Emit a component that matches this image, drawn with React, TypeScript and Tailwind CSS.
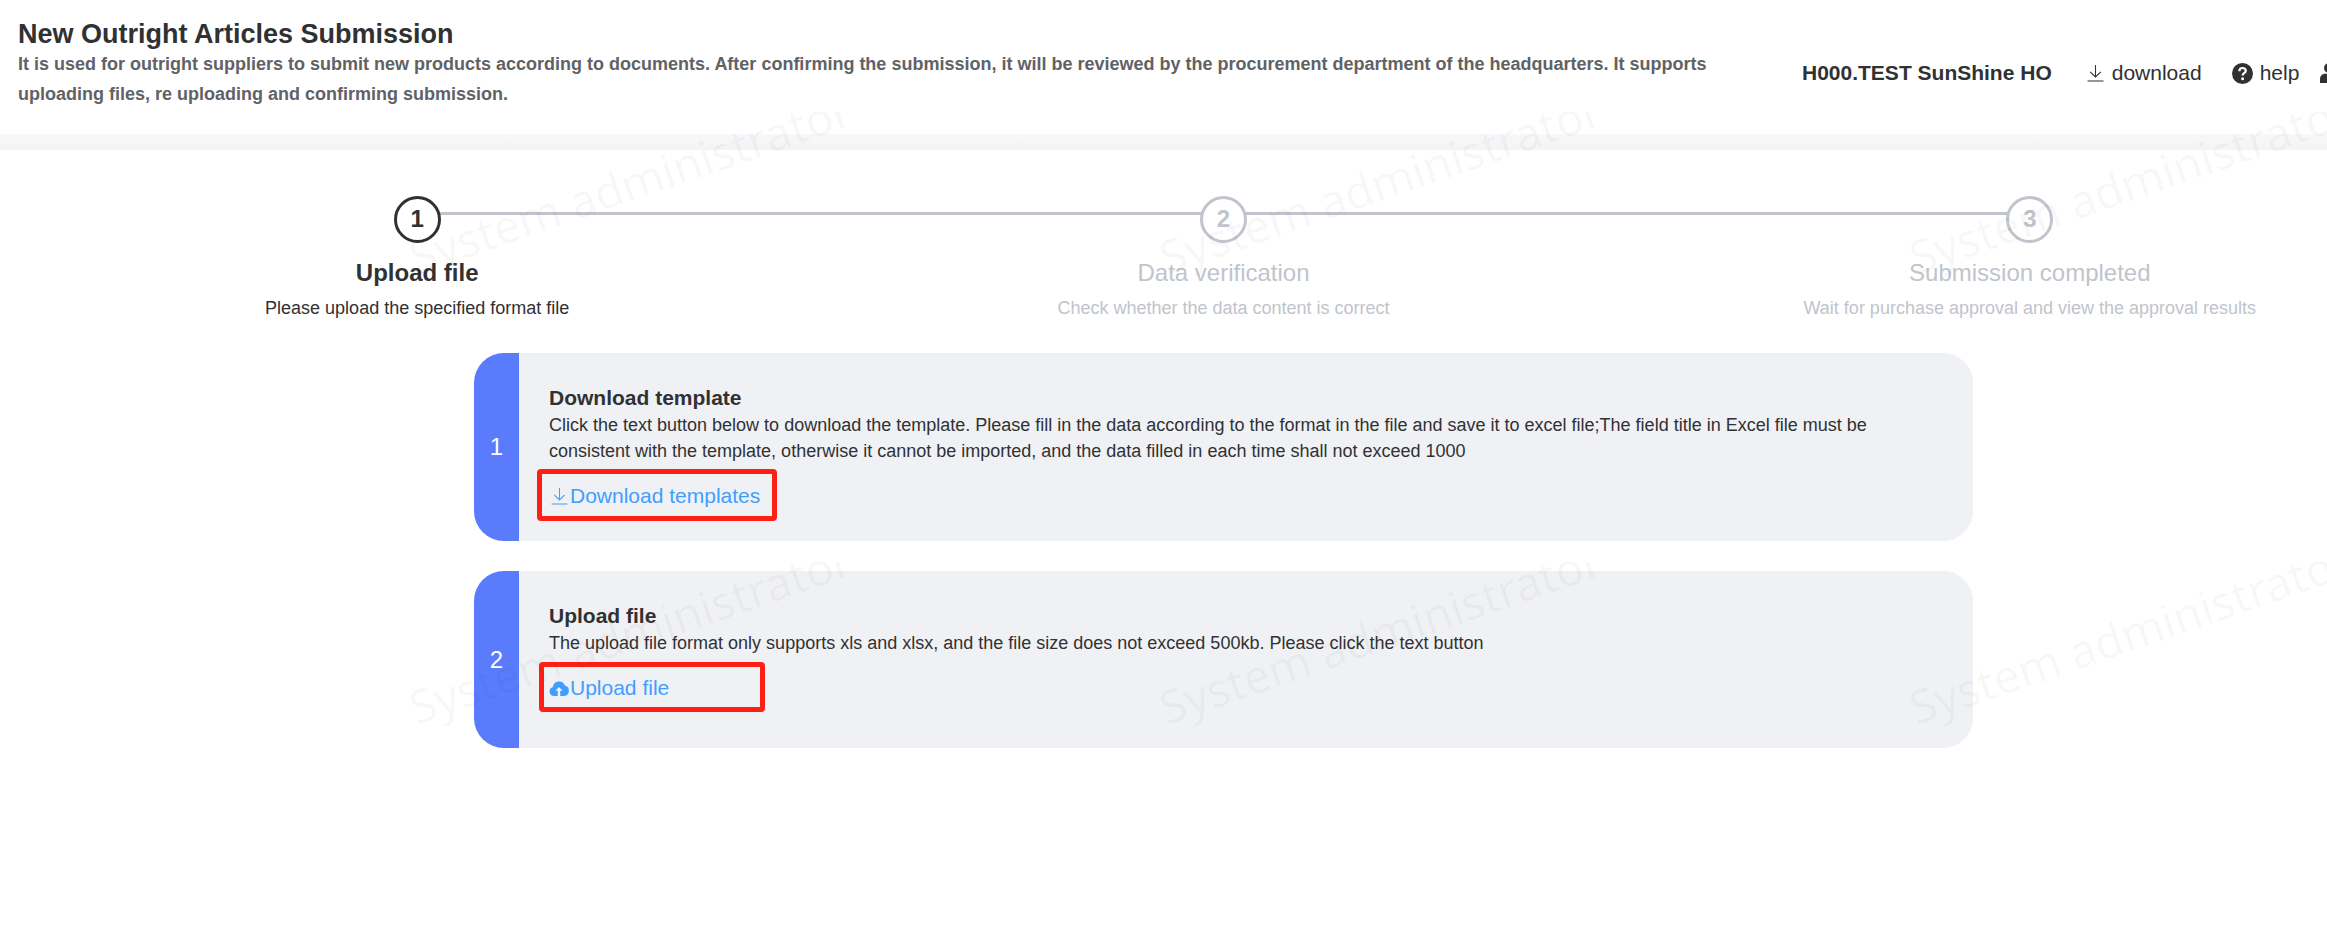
import React from 'react';

const steps = [
  { title: 'Upload file', desc: 'Please upload the specified format file' },
  { title: 'Data verification', desc: 'Check whether the data content is correct' },
  { title: 'Submission completed', desc: 'Wait for purchase approval and view the approval results' },
];

const DownloadIcon: React.FC<{ className?: string }> = ({ className }) => (
  <svg viewBox="0 0 16 16" fill="none" stroke="currentColor" strokeWidth="1" className={className}>
    <path d="M8 0v11M3 6.500 8 11.200l5-4.700M.5 15h15" />
  </svg>
);

const CloudIcon: React.FC = () => (
  <svg viewBox="0 0 20 16" className="w-[20px] h-[16px] shrink-0">
    <path fill="currentColor" d="M5 16a4.600 4.600 0 0 1-1.100-9A6.200 6.200 0 0 1 15.900 5.600 5.300 5.300 0 0 1 15.200 16Z" />
    <path fill="#f0f1f5" d="M10 7l3.600 3.800h-2.400V16H8.800v-5.200H6.400Z" />
  </svg>
);

const HelpIcon: React.FC = () => (
  <svg viewBox="0 0 21 21" className="w-[21px] h-[21px] shrink-0">
    <circle cx="10.500" cy="10.500" r="10.500" fill="#303133" />
    <path d="M7.300 8.200c0-2 1.400-3.200 3.300-3.200s3.200 1.100 3.200 2.800c0 2.400-3.200 2.400-3.200 4.700" fill="none" stroke="#fff" strokeWidth="2.200" />
    <circle cx="10.600" cy="15.700" r="1.500" fill="#fff" />
  </svg>
);

const UserIcon: React.FC = () => (
  <svg viewBox="0 0 18 20" className="w-[18px] h-[20px] shrink-0">
    <circle cx="9" cy="5" r="5" fill="#303133" />
    <path d="M0 20v-4c0-3 2.500-5.200 5-5.200h8c2.500 0 5 2.200 5 5.200v4Z" fill="#303133" />
  </svg>
);

const App: React.FC = () => {
  return (
    <div className="relative h-[944px] w-full overflow-hidden bg-white font-['Liberation_Sans',Arial,sans-serif] text-[#303133]">
      <div className="w-[2447px]">
        {/* Header */}
        <header className="flex h-[134px] items-start">
          <div className="ml-[18px] w-[1720px] pt-[17px]">
            <h1 className="text-[27px] font-bold leading-[34px]">New Outright Articles Submission</h1>
            <p className="text-[18px] font-bold leading-[30px] text-[#606266] mt-[-2px]">
              It is used for outright suppliers to submit new products according to documents. After confirming the submission, it will be reviewed by the procurement department of the headquarters. It supports uploading files, re uploading and confirming submission.
            </p>
          </div>
          <div className="ml-[64px] flex h-[146px] items-center text-[21px]">
            <span className="font-bold">H000.TEST SunShine HO</span>
            <span className="ml-[35px] flex items-center gap-[8px]">
              <DownloadIcon className="w-[17px] h-[17px]" />
              download
            </span>
            <span className="ml-[30px] flex items-center gap-[7px]">
              <HelpIcon />
              help
            </span>
            <span className="ml-[21px]">
              <UserIcon />
            </span>
          </div>
        </header>
        <div className="h-[16px] bg-linear-to-b from-[#f8f8fa] to-[#f3f4f6]" />

        {/* Steps */}
        <div className="ml-[14px] mt-[46px] grid w-[2419px] grid-cols-3">
          {steps.map((step, i) => (
            <div key={step.title} className="relative flex flex-col items-center">
              {i < steps.length - 1 && (
                <div className="absolute left-1/2 top-[16px] h-[3px] w-full bg-[#c0c4cc]" />
              )}
              <div
                className={`relative flex h-[47px] w-[47px] items-center justify-center rounded-full border-[3px] bg-white text-[24px] font-bold ${
                  i === 0 ? 'border-[#303133] text-[#303133]' : 'border-[#c0c4cc] text-[#c0c4cc]'
                }`}
              >
                <span className="mt-[-2px]">{i + 1}</span>
              </div>
              <div className={`mt-[14px] text-[24px] leading-[32px] ${i === 0 ? 'font-bold text-[#303133]' : 'text-[#c0c4cc]'}`}>
                {step.title}
              </div>
              <div className={`mt-[6px] text-[18px] leading-[26px] ${i === 0 ? 'text-[#303133]' : 'text-[#c0c4cc]'}`}>
                {step.desc}
              </div>
            </div>
          ))}
        </div>

        {/* Cards */}
        <div className="ml-[474px] mt-[32px] flex w-[1499px] flex-col gap-[30px]">
          <section className="flex h-[188px] overflow-hidden rounded-[30px] bg-[#f0f1f5]">
            <div className="flex w-[45px] shrink-0 items-center justify-center bg-[#5a7cfc] text-[24px] text-white">1</div>
            <div className="pl-[30px] pr-[50px] pt-[32px]">
              <h2 className="text-[21px] font-bold leading-[26px]">Download template</h2>
              <p className="text-[18px] leading-[26px] mt-[1px]">
                Click the text button below to download the template. Please fill in the data according to the format in the file and save it to excel file;The field title in Excel file must be consistent with the template, otherwise it cannot be imported, and the data filled in each time shall not exceed 1000
              </p>
              <a className="relative mt-[14px] flex h-[36px] items-center gap-[2px] text-[21px] text-[#409eff]">
                <DownloadIcon className="ml-[2px] w-[17px] h-[17px] shrink-0" />
                Download templates
                <span className="absolute left-[-12px] top-[-9px] h-[52px] w-[240px] rounded-[4px] border-[5px] border-[#ff2015]" />
              </a>
            </div>
          </section>

          <section className="flex h-[177px] overflow-hidden rounded-[30px] bg-[#f0f1f5]">
            <div className="flex w-[45px] shrink-0 items-center justify-center bg-[#5a7cfc] text-[24px] text-white">2</div>
            <div className="pl-[30px] pr-[50px] pt-[32px]">
              <h2 className="text-[21px] font-bold leading-[26px]">Upload file</h2>
              <p className="text-[18px] leading-[26px] mt-[1px]">
                The upload file format only supports xls and xlsx, and the file size does not exceed 500kb. Please click the text button
              </p>
              <a className="relative mt-[14px] flex h-[36px] items-center text-[21px] text-[#409eff]">
                <CloudIcon />
                <span className="ml-[1px]">Upload file</span>
                <span className="absolute left-[-10px] top-[-8px] h-[50px] w-[226px] rounded-[4px] border-[5px] border-[#ff2015]" />
              </a>
            </div>
          </section>
        </div>
      </div>

      {/* Watermark */}
      <div className="pointer-events-none absolute inset-0 grid grid-cols-[repeat(4,750px)] grid-rows-[repeat(2,450px)] pl-[333px] pt-[112px] font-['Noto_Sans',sans-serif] text-[46px] text-black/[0.035]">
        {Array.from({ length: 8 }).map((_, i) => (
          <div key={i} className="relative overflow-hidden">
            <span className="absolute left-[78px] top-[112px] origin-left -rotate-[19deg] whitespace-nowrap">System administrator</span>
          </div>
        ))}
      </div>
    </div>
  );
};

export default App;
